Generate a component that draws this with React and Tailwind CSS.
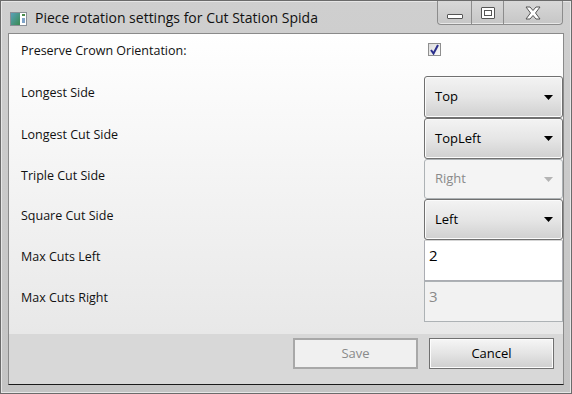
import React from 'react'

const font = { fontFamily: '"Open Sans", "Noto Sans", sans-serif' }

const Arrow = ({ disabled }) => (
  <svg width="9" height="5" viewBox="0 0 9 5" className="shrink-0">
    <path d="M0 0 L9 0 L4.5 5 Z" fill={disabled ? '#b4b4b4' : '#000'} />
  </svg>
)

const Combo = ({ value, disabled }) =>
  disabled ? (
    <div className="flex h-full w-full items-center justify-between rounded-[3px] border border-[#adb2b5] bg-[#f4f4f4] pl-[10px] pr-[9px] text-[#8a8a8a]">
      <span>{value}</span>
      <Arrow disabled />
    </div>
  ) : (
    <div className="flex h-full w-full items-center justify-between rounded-[3px] border border-[#707070] bg-gradient-to-b from-[#f3f3f3] via-[#e6e6e6] to-[#d0d0d0] pl-[10px] pr-[9px] text-black shadow-[inset_0_0_0_1px_#fbfbfb]">
      <span>{value}</span>
      <Arrow />
    </div>
  )

const TextBox = ({ value, disabled }) => (
  <div
    className={
      'h-full w-full border px-[4px] pt-[3px] text-[15px] ' +
      (disabled
        ? 'border-[#adb2b5] bg-[#f2f2f2] text-[#8a8a8a]'
        : 'border-[#abadb3] border-t-[#d5d5d5] bg-white text-black')
    }
  >
    {value}
  </div>
)

const Row = ({ label, height, children }) => (
  <div className="flex" style={{ height }}>
    <div className="w-[415px] pl-[12px] pt-[8px] text-[12.5px] text-[#111]">{label}</div>
    <div className="w-[139px] text-[13px]">{children}</div>
  </div>
)

export default function App() {
  return (
    <div className="h-[394px] w-[572px] overflow-hidden bg-[#c4c4c4]" style={font}>
      <div className="relative flex h-full w-full flex-col border border-[#6b6b6b] bg-gradient-to-b from-[#cfcfcf] to-[#c4c4c4] shadow-[inset_0_0_0_1px_#e6e6e6]">
        {/* title bar */}
        <div className="flex h-[32px] shrink-0 items-start">
          <div className="ml-[9px] mt-[11px] flex h-[14px] w-[17px] overflow-hidden border border-[#8a8f96] bg-white">
            <div className="w-[9px] bg-gradient-to-br from-[#5aa0b9] to-[#3b8a4f]" />
            <div className="ml-[2px] flex flex-col gap-[2px] pt-[1px]">
              <div className="h-[2px] w-[3px] bg-[#4a8c4a]" />
              <div className="h-[5px] w-[3px] bg-[#7fa3c8]" />
            </div>
          </div>
          <div className="ml-[8px] mt-[6px] text-[14px] text-[#111]">
            Piece rotation settings for Cut Station Spida
          </div>
          <div className="ml-auto mr-[8px] flex h-[24px] overflow-hidden rounded-b-[4px] border border-t-0 border-[#8c8c8c] bg-gradient-to-b from-[#d8d8d8] to-[#c6c6c6] shadow-[inset_0_-1px_0_#e8e8e8]">
            <div className="flex w-[34px] items-center justify-center border-r border-[#8c8c8c]">
              <div className="mt-[8px] h-[5px] w-[16px] rounded-[1px] border border-[#555] bg-white" />
            </div>
            <div className="flex w-[32px] items-center justify-center border-r border-[#8c8c8c]">
              <div className="h-[12px] w-[14px] rounded-[1px] border border-[#555] bg-white p-[2px]">
                <div className="h-full w-full border border-[#555]" />
              </div>
            </div>
            <div className="flex w-[58px] items-center justify-center">
              <svg width="16" height="14" viewBox="0 0 16 14">
                <path
                  d="M1 1 H5 L8 4.5 L11 1 H15 L10.5 7 L15 13 H11 L8 9.5 L5 13 H1 L5.5 7 Z"
                  fill="#fff"
                  stroke="#555"
                  strokeWidth="1"
                  strokeLinejoin="round"
                />
              </svg>
            </div>
          </div>
        </div>

        {/* client area */}
        <div className="mx-[7px] mb-[8px] flex flex-1 flex-col border border-[#8a8a8a] border-b-[#1a1a1a] border-r-[#8a8a8a]">
          <div className="flex flex-1 flex-col bg-gradient-to-b from-white to-[#e8e8e8]">
            <Row label="Preserve Crown Orientation:" height={42}>
              <div className="ml-[4px] mt-[9px] flex h-[13px] w-[13px] items-center justify-center border border-[#8f8f8f] bg-gradient-to-br from-[#dcdcdc] to-[#fafafa]">
                <svg width="11" height="11" viewBox="0 0 11 11">
                  <path d="M2 6 L4.5 9.5 L9 1" fill="none" stroke="#2b2f8c" strokeWidth="2" />
                </svg>
              </div>
            </Row>
            <Row label="Longest Side" height={42}>
              <Combo value="Top" />
            </Row>
            <Row label="Longest Cut Side" height={41}>
              <Combo value="TopLeft" />
            </Row>
            <Row label="Triple Cut Side" height={40}>
              <Combo value="Right" disabled />
            </Row>
            <Row label="Square Cut Side" height={41}>
              <Combo value="Left" />
            </Row>
            <Row label="Max Cuts Left" height={41}>
              <TextBox value="2" />
            </Row>
            <Row label="Max Cuts Right" height={41}>
              <TextBox value="3" disabled />
            </Row>
            <div className="flex-1" />
          </div>

          {/* footer */}
          <div className="flex h-[50px] shrink-0 items-start justify-end gap-[11px] bg-[#d8d8d8] pr-[9px] pt-[4px] text-[13px]">
            <div className="flex h-[31px] w-[125px] items-center justify-center border-2 border-[#a8a8a8] bg-[#f0f0f0] text-[#8a8a8a]">
              Save
            </div>
            <div className="flex h-[31px] w-[125px] items-center justify-center border border-[#707070] bg-gradient-to-b from-[#f6f6f6] via-[#e4e4e4] to-[#cfcfcf] text-black shadow-[inset_0_0_0_1px_#fcfcfc]">
              Cancel
            </div>
          </div>
        </div>
      </div>
    </div>
  )
}
